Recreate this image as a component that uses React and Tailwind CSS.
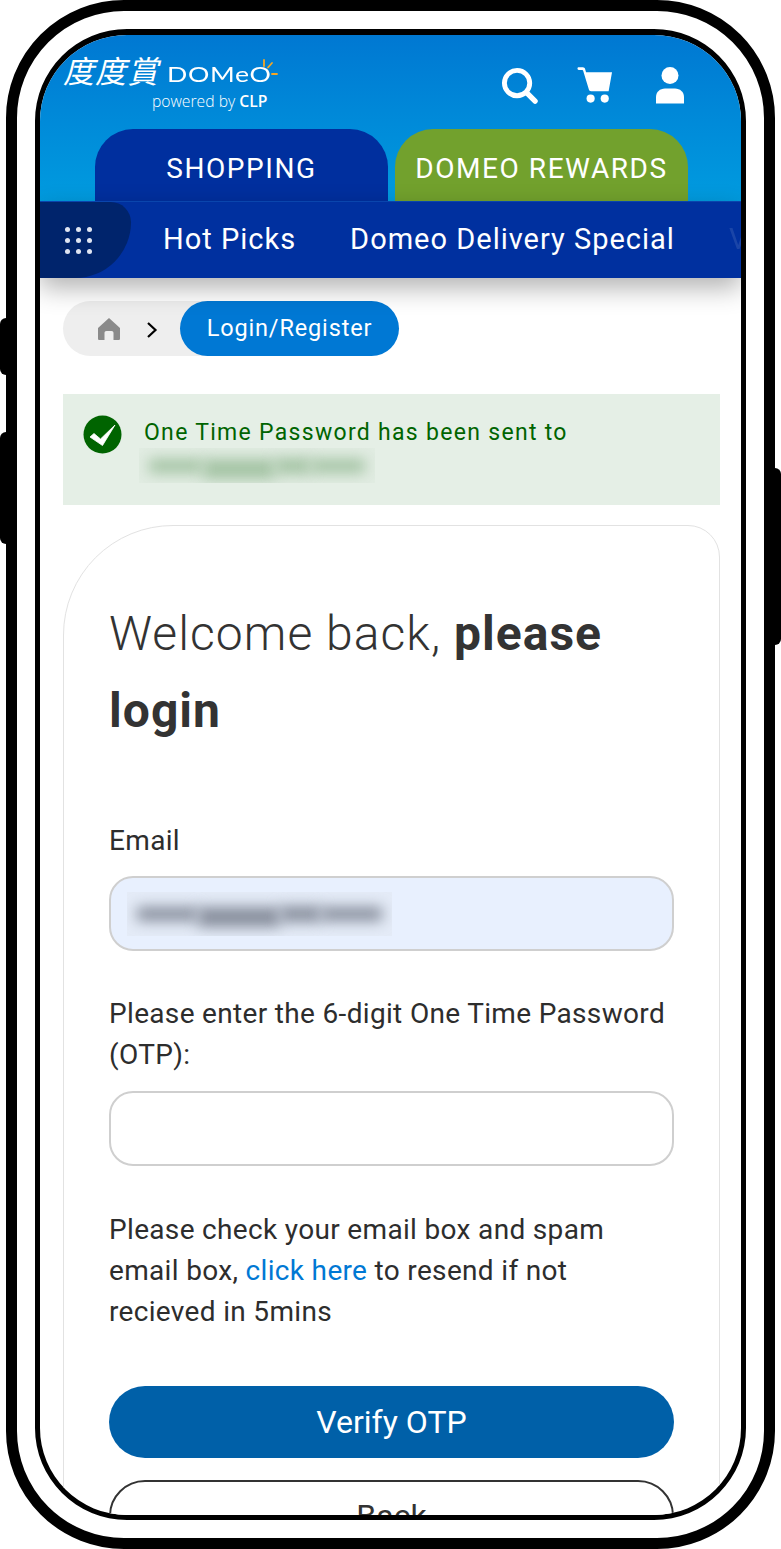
import React from 'react';

const dots = [0, 1, 2, 3, 4, 5, 6, 7, 8];

function SearchIcon() {
  return (
    <svg width="37" height="37" viewBox="0 0 38 38" fill="none" stroke="white" className="shrink-0">
      <circle cx="16.5" cy="16.5" r="13" strokeWidth="5" />
      <path d="M26.5 26.5 L35 35" strokeWidth="5.5" strokeLinecap="round" />
    </svg>
  );
}

function CartIcon() {
  return (
    <svg width="36" height="36" viewBox="0 0 37 37" fill="white" className="shrink-0">
      <path d="M0.5 1.5 C0.5 0.7 1 0.3 1.8 0.3 H6 C7.2 0.3 8 1 8.4 2.2 L9.3 5.5 H36 L32.5 24.8 H14.5 C13.3 24.8 12.5 24 12.2 23 L6.4 4 C6.2 3.3 5.8 3 5 3 H1.8 C1 3 0.5 2.4 0.5 1.5 Z" />
      <circle cx="14" cy="32.5" r="4.2" />
      <circle cx="28.5" cy="32.5" r="4.2" />
    </svg>
  );
}

function UserIcon() {
  return (
    <svg width="28" height="37" viewBox="0 0 28 37" fill="white" className="shrink-0">
      <circle cx="14" cy="8.5" r="8.5" />
      <path d="M0 36.5 V30 C0 25 4 21.5 9 21.5 H19 C24 21.5 28 25 28 30 V36.5 Z" />
    </svg>
  );
}

function HomeIcon() {
  return (
    <svg width="24" height="24" viewBox="0 0 24 24" fill="#8a8a8a" className="shrink-0">
      <path d="M12 1 L23 11 V21.5 C23 22.6 22.4 23 21.5 23 H16.5 V16 C16.5 14.8 15.8 14 14.5 14 H9.5 C8.2 14 7.5 14.8 7.5 16 V23 H2.5 C1.6 23 1 22.6 1 21.5 V11 Z" />
    </svg>
  );
}

function CheckBadge() {
  return (
    <svg width="39" height="39" viewBox="0 0 39 39" className="shrink-0">
      <circle cx="19.5" cy="19.5" r="19" fill="#006400" />
      <path d="M7 22 L11 18.5 L17.5 24 L32 10 L19.5 30.5 Z" fill="white" stroke="white" strokeWidth="0.8" strokeLinejoin="round" />
    </svg>
  );
}

// hidden address in the screenshot, just blurred blobs
function BlurredBox({ tone, className }) {
  return (
    <div className={`overflow-hidden flex items-center px-[10px] ${className}`}>
      <div className={`h-[14px] flex-[3] blur-[7px] ${tone}`} />
      <div className={`h-[20px] flex-[4] mt-[6px] blur-[7px] ${tone}`} />
      <div className={`h-[16px] flex-[2] blur-[7px] ${tone}`} />
      <div className={`h-[14px] flex-[3] blur-[7px] ${tone}`} />
    </div>
  );
}

function Header() {
  return (
    <div className="h-[166px] bg-gradient-to-b from-[#0078d2] to-[#009bdf] flex flex-col">
      <div className="h-[94px] flex justify-between">
        <div className="pl-[23px] pt-[16px] w-[260px]">
          <div className="flex items-end h-[38px] text-white">
            <span className="text-[31px] leading-[38px] italic font-['Noto_Sans_CJK_TC',sans-serif] tracking-[1px]">度度賞</span>
            <span className="ml-[8px] text-[21px] leading-[30px] tracking-[0.5px] font-['Lato',sans-serif] scale-x-[1.27] origin-left">DOMeO</span>
            <svg width="15" height="20" viewBox="0 0 15 20" className="ml-[14px] mb-[10px] shrink-0" fill="none" stroke="#f5a623" strokeWidth="1.8" strokeLinecap="round">
              <path d="M1 1 V7 M9 4 L5 8.5 M9 15 H14" />
            </svg>
          </div>
          <div className="text-[15.7px] leading-[19px] mt-[3px] ml-[89px] text-white font-['Open_Sans',sans-serif] font-light whitespace-nowrap">
            powered by <span className="font-semibold">CLP</span>
          </div>
        </div>
        <div className="flex items-start pt-[32px] pr-[57px]">
          <SearchIcon />
          <div className="ml-[39px]">
            <CartIcon />
          </div>
          <div className="ml-[43px]">
            <UserIcon />
          </div>
        </div>
      </div>
      <div className="flex gap-[7px] pl-[55px] h-[72px] text-[28px] tracking-[1.55px] text-white">
        <div className="w-[293px] rounded-t-[38px] bg-[#002f9e] flex items-center justify-center pt-[7px]">SHOPPING</div>
        <div className="w-[293px] rounded-t-[38px] bg-[#72a12d] flex items-center justify-center pt-[7px]">DOMEO REWARDS</div>
      </div>
    </div>
  );
}

function NavBar() {
  return (
    <div className="relative z-10 h-[77px] bg-[#00309f] border-t border-[#0a45ad] flex items-center shadow-[0_10px_24px_rgba(0,0,0,0.3)] overflow-hidden text-white text-[29px] tracking-[1px] whitespace-nowrap">
      <div className="w-[91px] h-full bg-[#00246c] rounded-tr-[26px] rounded-br-[72px] flex items-center pl-[25px] shrink-0">
        <div className="grid grid-cols-3 gap-x-[6px] gap-y-[6px]">
          {dots.map((d) => (
            <div key={d} className="w-[5px] h-[5px] rounded-full bg-[#dfe5f2]" />
          ))}
        </div>
      </div>
      <span className="ml-[32px]">Hot Picks</span>
      <span className="ml-[54px]">Domeo Delivery Special</span>
      <span className="ml-[54px] opacity-10">V</span>
    </div>
  );
}

function Breadcrumb() {
  return (
    <div className="flex mt-[23px] h-[55px]">
      <div className="w-[160px] bg-[#eeeeee] rounded-l-full flex items-center pl-[34px] shrink-0">
        <HomeIcon />
        <svg width="12" height="18" viewBox="0 0 12 18" fill="none" stroke="black" strokeWidth="2.2" className="ml-[25px] mt-[3px] shrink-0">
          <path d="M2 2 L9.5 9 L2 16" />
        </svg>
      </div>
      <div className="-ml-[43px] w-[219px] rounded-full bg-[#0078d4] text-white text-[23.5px] tracking-[0.85px] flex items-center justify-center">Login/Register</div>
    </div>
  );
}

function Alert() {
  return (
    <div className="mt-[38px] h-[111px] bg-[#e5efe6] flex pl-[20px] pt-[21px] gap-[22px]">
      <CheckBadge />
      <div className="pt-[3px]">
        <div className="text-[23px] leading-[30px] tracking-[1.3px] text-[#006400] whitespace-nowrap">One Time Password has been sent to</div>
        <BlurredBox tone="bg-[#a3c3a3]" className="-ml-[5px] w-[236px] h-[35px] bg-[#e1ece2]" />
      </div>
    </div>
  );
}

function LoginCard() {
  return (
    <div className="mt-[20px] border border-[#e2e2e2] rounded-tl-[110px] rounded-tr-[32px] pt-[69px] px-[45px] h-[1100px] text-[#2d2d2d]">
      <h1 className="text-[48px] leading-[77px] tracking-[1.05px] font-light m-0 text-[#333333]">
        Welcome back, <span className="font-bold">please login</span>
      </h1>
      <label className="block mt-[71px] text-[28px] leading-[41px] tracking-[0.33px]">Email</label>
      <div className="mt-[15px] h-[75px] rounded-[24px] border-2 border-[#cfcfcf] bg-[#e8f0fe] flex items-center pl-[16px]">
        <BlurredBox tone="bg-[#868d9b]" className="w-[265px] h-[44px] bg-[#e4ebf7]" />
      </div>
      <label className="block mt-[42px] text-[28px] leading-[41px] tracking-[0.33px]">Please enter the 6-digit One Time Password (OTP):</label>
      <div className="mt-[16px] h-[75px] rounded-[24px] border-2 border-[#cfcfcf] bg-white" />
      <p className="mt-[43px] text-[28px] leading-[41px] tracking-[0.33px] m-0">
        Please check your email box and spam email box, <span className="text-[#0078d4]">click here</span> to resend if not recieved in 5mins
      </p>
      <button className="mt-[54px] w-full h-[72px] rounded-[36px] bg-[#0060a8] text-white text-[32px] block">Verify OTP</button>
      <button className="mt-[22px] w-full h-[72px] rounded-[36px] border-2 border-[#333333] bg-white text-[#333333] text-[32px] block">Back</button>
    </div>
  );
}

export default function App() {
  return (
    <div className="relative w-[781px] h-[1549px] bg-white overflow-hidden font-['Roboto',sans-serif]">
      {/* side buttons */}
      <div className="absolute left-0 top-[318px] w-[8px] h-[57px] bg-black rounded-l-[6px]" />
      <div className="absolute left-0 top-[432px] w-[8px] h-[112px] bg-black rounded-l-[6px]" />
      <div className="absolute right-0 top-[468px] w-[8px] h-[177px] bg-black rounded-r-[6px]" />

      <div className="relative mx-[6px] h-full border-[11px] border-black rounded-[118px] bg-white pt-[18px] px-[18px] pb-[18px]">
        <div className="h-full border-t-[6px] border-x-[5px] border-b-[5px] border-black rounded-[92px] overflow-hidden bg-white">
          <Header />
          <NavBar />
          <div className="px-[23px] pr-[21px]">
            <Breadcrumb />
            <Alert />
            <LoginCard />
          </div>
        </div>
      </div>
    </div>
  );
}
